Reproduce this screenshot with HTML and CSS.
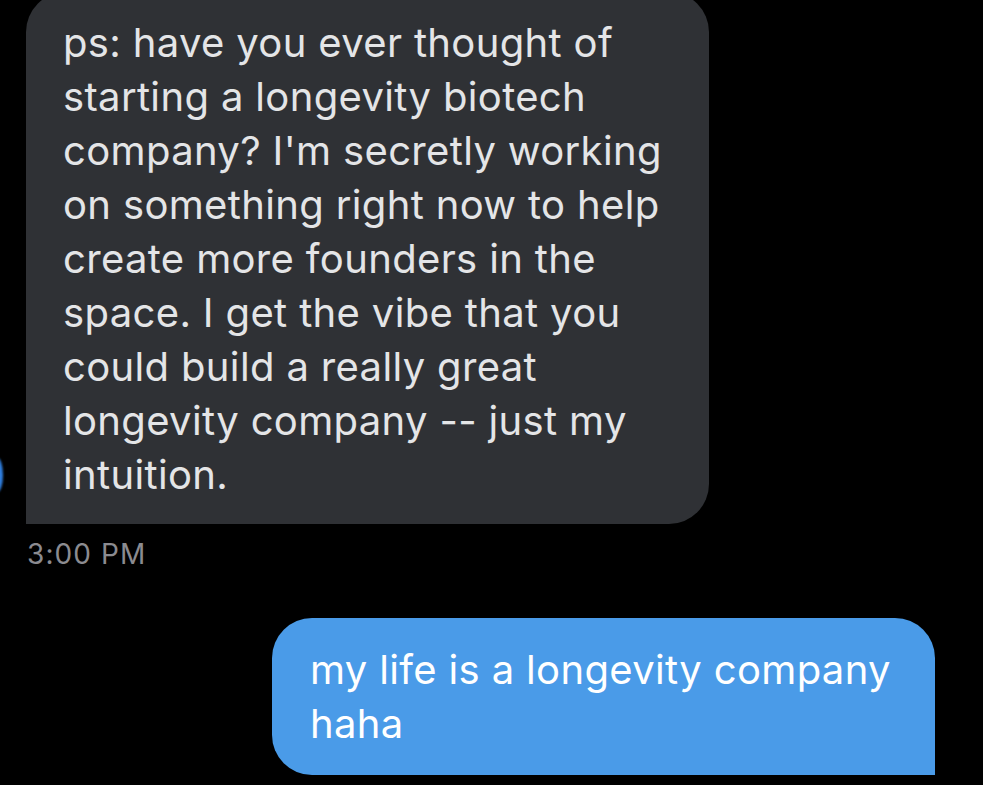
FILE: index.html
```html
<!DOCTYPE html>
<html>
<head>
<meta charset="utf-8">
<link rel="stylesheet" href="styles.css">
</head>
<body>
<div class="thread">
  <div class="row row-in">
    <span class="edge-dot"></span>
    <div class="bubble bubble-in">ps: have you ever thought of<br>starting a longevity biotech<br>company? I'm secretly working<br>on something right now to help<br>create more founders in the<br>space. I get the vibe that you<br>could build a really great<br>longevity company -- just my<br>intuition.</div>
  </div>
  <div class="timestamp">3:00 PM</div>
  <div class="row row-out">
    <div class="bubble bubble-out">my life is a longevity company<br>haha</div>
  </div>
</div>
</body>
</html>
```

FILE: styles.css
```css
html, body {
  margin: 0;
  padding: 0;
  background: #000;
  height: 100%;
  overflow: hidden;
}
.thread {
  display: flex;
  flex-direction: column;
  font-family: "Inter", "Liberation Sans", Arial, sans-serif;
}
.row {
  position: relative;
  display: flex;
}
.row-in {
  margin-top: -8px;
  padding-left: 26px;
}
.row-out {
  justify-content: flex-end;
  padding-right: 48px;
  margin-top: 48px;
}
.edge-dot {
  position: absolute;
  left: -8px;
  top: 466px;
  width: 11px;
  height: 34px;
  border-radius: 50%;
  background: #2f7fe0;
  filter: blur(1.2px);
}
.bubble {
  font-size: 40px;
  line-height: 54px;
  letter-spacing: 0.35px;
  box-sizing: border-box;
}
.bubble-in {
  width: 683px;
  background: #2f3135;
  color: #e4e5e7;
  padding: 24px 20px 22px 37px;
  border-radius: 40px 40px 40px 0;
}
.bubble-out {
  width: 663px;
  background: #4a9be8;
  color: #fff;
  padding: 25px 20px 24px 38px;
  border-radius: 40px 40px 0 40px;
}
.timestamp {
  color: #8b8b90;
  font-size: 28px;
  line-height: 32px;
  letter-spacing: 1.1px;
  padding-left: 27px;
  margin-top: 14px;
}
```
